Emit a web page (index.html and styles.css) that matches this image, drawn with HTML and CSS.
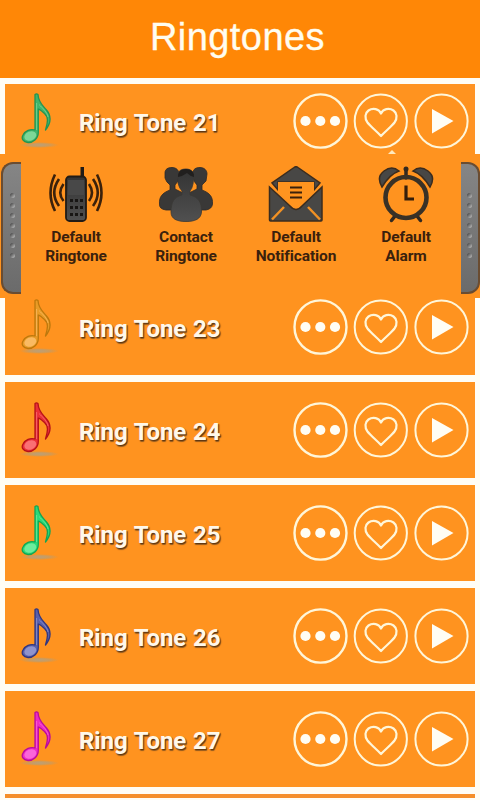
FILE: index.html
```
<!DOCTYPE html>
<html lang="en">
<head>
<meta charset="utf-8">
<title>Ringtones</title>
<link rel="stylesheet" href="styles.css">
</head>
<body>
<svg class="defs" width="0" height="0" aria-hidden="true">
  <defs>
    <radialGradient id="floor"><stop offset="0" stop-color="#b9a07c"/><stop offset=".5" stop-color="#bf9d6c" stop-opacity=".8"/><stop offset="1" stop-color="#c49a60" stop-opacity="0"/></radialGradient>
    <linearGradient id="steel" x1="0" y1="0" x2="0" y2="1"><stop offset="0" stop-color="#333"/><stop offset="1" stop-color="#505050"/></linearGradient>
    <symbol id="note" viewBox="0 0 42 56">
      <ellipse cx="20" cy="52" rx="20" ry="3" fill="url(#floor)"/>
      <path class="edge" d="M16 1.500Q17.500 .3 19 1.500C19.500 10 24 12.500 27.500 17C32.500 23 32 30 26.500 37C29 29 29.500 24 25.500 20.500C23 18 21 16.500 19.300 16L19.300 39C19.500 46 13.500 49.800 9 49.500C4 49 2 45.500 4 42C6 38 11.500 35.500 16 37Z"/>
      <ellipse class="shine" cx="11.300" cy="43" rx="6.200" ry="4.500" transform="rotate(-22 11.300 43)"/>
      <path class="glint" d="M17.600 10V37M20 11.500C24 15.500 28 19 29 24"/>
    </symbol>
    <symbol id="buttons" viewBox="0 0 176 56">
      <g fill="none" stroke="#fff6d9">
        <ellipse cx="27.500" cy="28" rx="26" ry="26.600" stroke-width="2.400"/>
        <ellipse cx="87.800" cy="28" rx="26.100" ry="26.600" stroke-width="2"/>
        <ellipse cx="148.500" cy="28" rx="26.100" ry="26.600" stroke-width="2"/>
        <path d="M88 43C83.500 38 78 34 74.500 29.500C71.300 25 72 20 75.500 17.500C80 14.500 86 16 88 20.500C90 16 96 14.500 100.500 17.500C104 20 104.700 25 101.500 29.500C98 34 92.500 38 88 43Z" stroke-width="2.200" stroke-linejoin="round"/>
      </g>
      <g fill="#fffdf4">
        <circle cx="12.500" cy="28" r="5.100"/><circle cx="27.300" cy="28" r="5.100"/><circle cx="42" cy="28" r="5.100"/>
        <path d="M139 16L160.500 28L139 40.500Z"/>
      </g>
    </symbol>
  </defs>
</svg>
<header class="bar"><h1>Ringtones</h1></header>
<main class="list">
  <article class="row green"><svg class="note"><use href="#note"/></svg><span class="name">Ring Tone 21</span><svg class="buttons"><use href="#buttons"/></svg></article>
  <article class="row"></article>
  <article class="row gold"><svg class="note"><use href="#note"/></svg><span class="name">Ring Tone 23</span><svg class="buttons"><use href="#buttons"/></svg></article>
  <article class="row red"><svg class="note"><use href="#note"/></svg><span class="name">Ring Tone 24</span><svg class="buttons"><use href="#buttons"/></svg></article>
  <article class="row mint"><svg class="note"><use href="#note"/></svg><span class="name">Ring Tone 25</span><svg class="buttons"><use href="#buttons"/></svg></article>
  <article class="row blue"><svg class="note"><use href="#note"/></svg><span class="name">Ring Tone 26</span><svg class="buttons"><use href="#buttons"/></svg></article>
  <article class="row pink"><svg class="note"><use href="#note"/></svg><span class="name">Ring Tone 27</span><svg class="buttons"><use href="#buttons"/></svg></article>
  <article class="row last"></article>
</main>
<section class="popup">
  <span class="pointer"></span>
  <div class="grip left"><i></i><i></i><i></i><i></i><i></i><i></i><i></i></div>
  <div class="actions">
    <div class="action">
      <svg class="icon" viewBox="0 0 56 58">
        <path d="M32.500 1h3.500v12H32.500z" fill="#211b16"/>
        <rect x="18" y="10.500" width="20" height="44.500" rx="3.500" fill="url(#steel)" stroke="#211b16" stroke-width="1.800"/>
        <path d="M20 14h16v15H20z" fill="#484848"/>
        <g fill="#181614"><path d="M22 33h3v3h-3zm5 0h3v3h-3zm5 0h3v3h-3zM22 40h3v3h-3zm5 0h3v3h-3zm5 0h3v3h-3zM22 47h3v3h-3zm5 0h3v3h-3zm5 0h3v3h-3z"/></g>
        <g fill="none" stroke="#3b210b" stroke-width="2.600"><path d="M15.500 18Q9 27 15.500 35M11 13Q1.500 27 11 40M7 8.500Q-2 27 7 45M41 18Q47 27 41 35M45 13Q54.500 27 45 40M49 8.500Q58 27 49 45"/></g>
      </svg>
      <span>Default<br>Ringtone</span>
    </div>
    <div class="action">
      <svg class="icon" viewBox="0 0 56 58">
        <g fill="#393837" stroke="#2c2a28" stroke-width=".8">
          <path d="M7 7C7 3 10 1.500 14 1.500S21 4 21 8L20 15L17 19V23L27 28V44H8Q1 43 1.500 38C1 31 4 27 12 24V19Q8 16 7 12Z"/>
          <path d="M35 7C35 3 38 1.500 42 1.500S49 4 49 8L48 15L44 19V24C52 27 55 31 54.500 38Q54 43 48 44H29V28L39 23V19Q36 16 35 12Z"/>
        </g>
        <path d="M20 9C20 5 23 3 28 3S36 6 36 10L35 18Q34 23 32 25V29C40 31 44 36 43.500 46C43 53 37 55.500 28 55.500S13 53 13 46C13 36 16 31 24 29V25Q21 22 20 17Z" fill="url(#steel)" stroke="#3a3835" stroke-width=".8"/>
        <path d="M20 11Q20 3 28 3T36 11Q32 10 29 7Q25 10 20 11Z" fill="#211f1e"/>
      </svg>
      <span>Contact<br>Ringtone</span>
    </div>
    <div class="action">
      <svg class="icon" viewBox="0 0 56 58">
        <path d="M26 1.500Q28 0 30 1.500L52 17L46 24V16H10V24L4 17Z" fill="#484745" stroke="#3b2c1e" stroke-width="1.500"/>
        <path d="M10 16H46V26L28 43L10 26Z" fill="#ff941f"/>
        <path d="M1.500 21L22 40Q28 47 34 40L54 21V54Q54 55 53 55H2.500Q1.500 55 1.500 54Z" fill="#484745" stroke="#3b2c1e" stroke-width="1.500"/>
        <path d="M4 53.500L16 41M52 53.500L40 41" stroke="#f29123" stroke-width="2.500"/>
        <path d="M22 21.500H34M22 26.500H34M22 31.500H34" stroke="#3b210b" stroke-width="2.200"/>
      </svg>
      <span>Default<br>Notification</span>
    </div>
    <div class="action">
      <svg class="icon" viewBox="0 0 56 58">
        <g fill="#484745" stroke="#3b2c1e" stroke-width="1.500"><path d="M4 21Q-2 11 6 5T21 5Q12 8 4 21ZM52 21Q58 11 50 5T35 5Q44 8 52 21Z"/></g>
        <path d="M28 3V12M17 50L13.500 54.500M39 50L42.500 54.500" stroke="#33291f" stroke-width="3.500" stroke-linecap="round"/>
        <circle cx="28" cy="3" r="2.500" fill="#33291f"/>
        <circle cx="28" cy="31.500" r="20.500" fill="none" stroke="#393126" stroke-width="4.600"/>
        <path d="M28 19.500V33H36" fill="none" stroke="#351e0b" stroke-width="3.200"/>
      </svg>
      <span>Default<br>Alarm</span>
    </div>
  </div>
  <div class="grip right"><i></i><i></i><i></i><i></i><i></i><i></i><i></i></div>
</section>
</body>
</html>
```
FILE: styles.css
```
* { box-sizing: border-box; }
body {
  margin: 0;
  height: 800px;
  overflow: hidden;
  position: relative;
  background: #fffdf5;
  font-family: Roboto, "Liberation Sans", sans-serif;
}
.defs { position: absolute; }
.bar {
  height: 78px;
  background: #ff8706;
  text-align: center;
}
.bar h1 {
  margin: 0;
  padding-right: 5px;
  color: #fffdf0;
  font: 400 38px/74px "Liberation Sans", sans-serif;
  letter-spacing: .45px;
  -webkit-text-stroke: .3px #fffdf0;
}
.list {
  height: 714px;
  margin-top: 6px;
  padding: 0 5px;
  overflow: hidden;
  display: flex;
  flex-direction: column;
  gap: 7px;
}
.row {
  flex: 0 0 96px;
  background: #ff931f;
  display: flex;
  align-items: center;
}
.row:first-child { margin-top: -11px; }
.row.last { flex-basis: 4px; background: #f58f2b; }
.note {
  width: 42px;
  height: 56px;
  margin: 0 18px 0 14px;
}
.name {
  flex: 1;
  padding: 3px 0 0;
  color: #fff8ea;
  font-size: 24px;
  font-weight: 700;
  line-height: 30px;
  letter-spacing: -.1px;
  word-spacing: 1px;
  white-space: nowrap;
  text-shadow: 1px 1px 1px #5c3510, 1px 2px 1px #9a5f22;
}
.buttons {
  width: 176px;
  height: 56px;
  margin-right: 6px;
}
.edge { fill: var(--fill); stroke: var(--edge); stroke-width: 1.3; stroke-linejoin: round; }
.shine { fill: var(--light); opacity: .75; }
.glint { fill: none; stroke: var(--light); stroke-width: 1; opacity: .6; }
.green { --fill: #41b56b; --edge: #249452; --light: #91e3a5; }
.gold { --fill: #e99b26; --edge: #bd780d; --light: #ffc477; }
.red { --fill: #eb3037; --edge: #b51119; --light: #ff858a; }
.mint { --fill: #2bd978; --edge: #10a655; --light: #83f2a8; }
.blue { --fill: #5960aa; --edge: #31367f; --light: #a3a4d7; }
.pink { --fill: #ed2ac4; --edge: #b90b9c; --light: #ff79e0; }
.popup {
  position: absolute;
  top: 154px;
  left: 0;
  width: 480px;
  height: 144px;
  padding-top: 8px;
  background: #ff931f;
  display: flex;
}
.pointer {
  position: absolute;
  left: 388px;
  top: -4px;
  border: solid transparent;
  border-width: 0 4px 4px;
  border-bottom-color: #ffe9bd;
}
.grip {
  flex: none;
  width: 20px;
  height: 132px;
  padding-bottom: 5px;
  background: linear-gradient(#858585, #6b6b6b);
  border: 2px solid #6a4c31;
  display: flex;
  flex-direction: column;
  align-items: center;
  justify-content: center;
  gap: 5px;
}
.grip i {
  width: 5px;
  height: 5px;
  border-radius: 50%;
  background: linear-gradient(135deg, #555 20%, #aaa 80%);
}
.left { margin-left: 1px; border-right: 0; border-radius: 12px 0 0 12px; }
.right { width: 19px; border-left: 0; border-radius: 0 12px 12px 0; }
.actions {
  width: 440px;
  padding-top: 4px;
  display: grid;
  grid-template-columns: repeat(4, 110px);
}
.action {
  display: flex;
  flex-direction: column;
  align-items: center;
  color: #3a210d;
  text-align: center;
  font-size: 15.5px;
  font-weight: 700;
  line-height: 19px;
  letter-spacing: -.1px;
}
.icon { width: 56px; height: 58px; margin-bottom: 4px; }
```
